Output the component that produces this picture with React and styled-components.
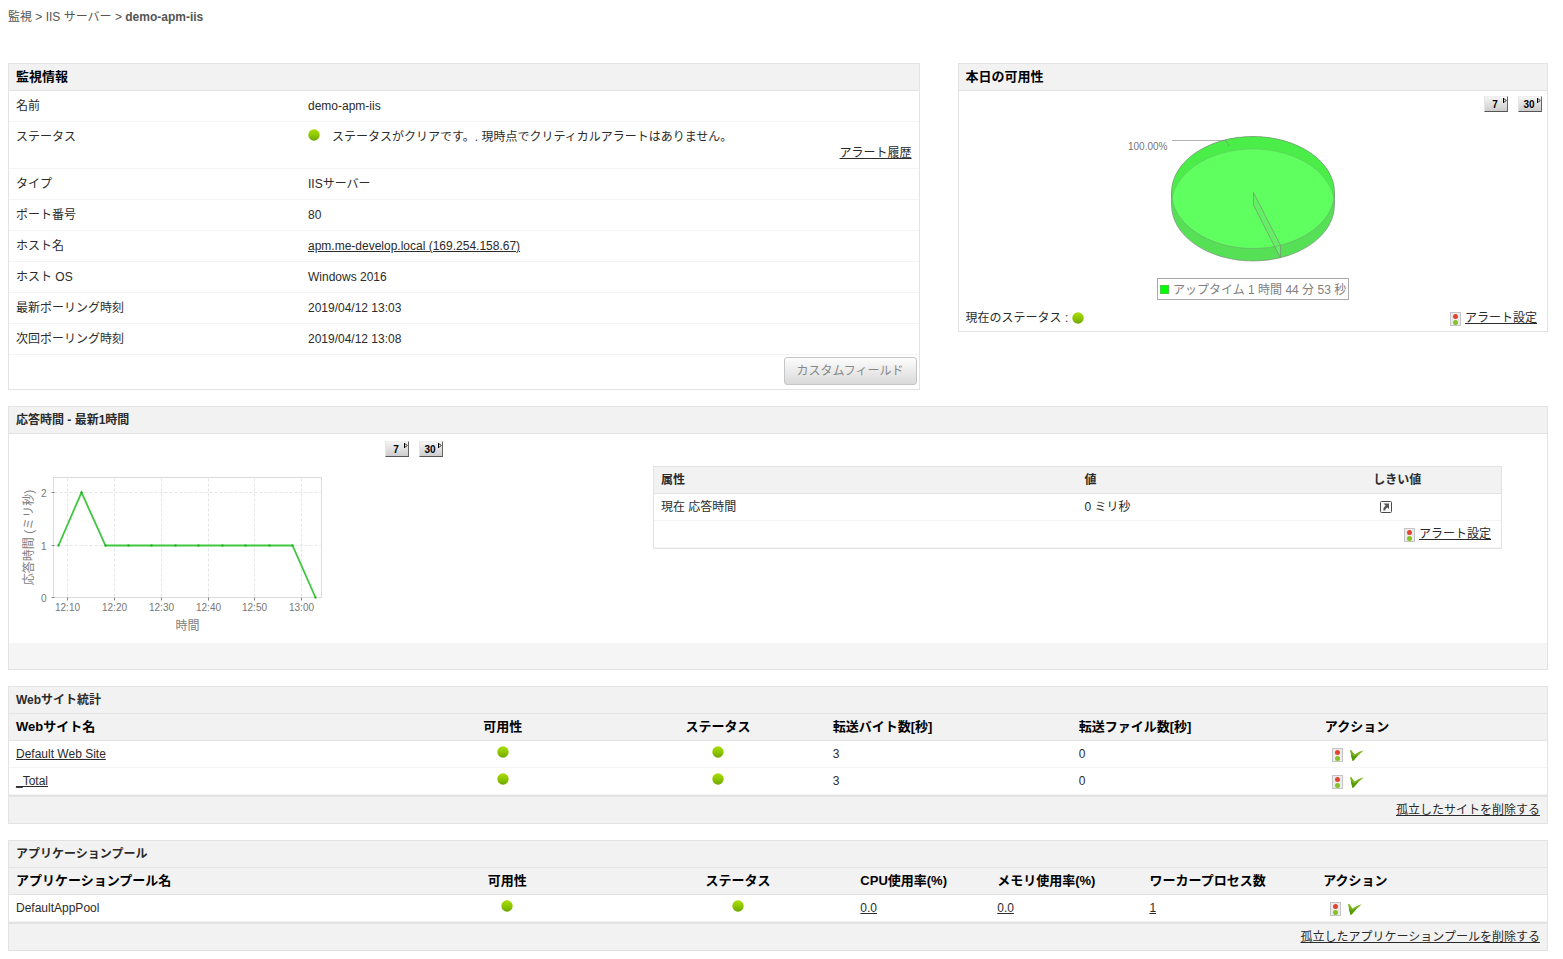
import React from 'react'
import styled, { createGlobalStyle } from 'styled-components'

const GlobalStyle = createGlobalStyle`
    body {
        margin: 0;
        background: #fff;
        color: #2b2b2b;
        font-family: "Liberation Sans", "Noto Sans CJK JP", sans-serif;
        font-size: 12px;
        line-height: 16px;
    }
    *, *::before, *::after {
        box-sizing: border-box;
    }
`

const line = '#e3e3e3'
const softLine = '#f4f4f4'
const headBg = '#f2f2f2'

const Page = styled.main`
    display: flex;
    flex-direction: column;
    gap: 16px;
    padding: 9px 15px 8px 8px;
`
const Breadcrumb = styled.nav`
    margin-bottom: 22px;
    color: #555;
`
const Crumb = styled.a`
    color: #555;
    text-decoration: none;
`
const TopRow = styled.div`
    display: flex;
    align-items: flex-start;
    gap: 38px;
`
const Panel = styled.section`
    min-width: 0;
    flex: ${(props) => props.$grow || 'none'};
    border: 1px solid ${line};
`
const PanelTitle = styled.h2`
    margin: 0;
    padding: 5px 7px;
    background: ${headBg};
    border-bottom: 1px solid ${line};
    color: ${(props) => (props.$large ? '#000' : '#2b2b2b')};
    font-size: ${(props) => (props.$large ? '13px' : '12px')};
    line-height: 16px;
`
const Table = styled.table`
    width: 100%;
    table-layout: fixed;
    border-collapse: separate;
    border-spacing: 0;
`
const InfoLabel = styled.th`
    width: 32.1%;
    padding: 7px;
    border-bottom: 1px solid ${softLine};
    font-weight: normal;
    text-align: left;
    vertical-align: top;
`
const InfoValue = styled.td`
    padding: 7px;
    border-bottom: 1px solid ${softLine};
`
const Th = styled.th`
    padding: 5px 7px;
    background: ${headBg};
    border-bottom: 1px solid ${line};
    color: ${(props) => (props.$small ? '#2b2b2b' : '#000')};
    font-size: ${(props) => (props.$small ? '12px' : '13px')};
    text-align: ${(props) => props.$align || 'left'};
    white-space: nowrap;
`
const Td = styled.td`
    height: 27px;
    padding: 5px 7px 5px ${(props) => (props.$indent ? '14px' : '7px')};
    border-bottom: 1px solid ${softLine};
    text-align: ${(props) => props.$align || 'left'};
`
const FootTd = styled.td`
    padding: 5px 7px;
    background: ${headBg};
    border-top: 2px solid ${line};
    text-align: right;
`
const Link = styled.a`
    color: #2b2b2b;
    text-decoration: underline;
`
const StatusText = styled.span`
    margin-left: 12px;
`
const RightLine = styled.div`
    text-align: right;
`
const ButtonRow = styled.div`
    display: flex;
    justify-content: flex-end;
    padding: 2px 2px 4px;
`
const CustomButton = styled.button`
    height: 28px;
    padding: 0 12px;
    border: 1px solid #c6c6c6;
    border-radius: 3px;
    background: linear-gradient(#fdfdfd, #d9d9d9);
    color: #888;
    font: inherit;
`
const RangeRow = styled.div`
    display: flex;
    justify-content: flex-end;
    gap: 10px;
`
const RangeButton = styled.button`
    position: relative;
    width: 24px;
    height: 16px;
    padding: 0 2px 0 0;
    border: 1px solid;
    border-color: #efefef #666 #555 #e6e6e6;
    background: linear-gradient(#f4f4f4, #cdcdcd);
    color: #000;
    font: bold 10px/16px "Liberation Sans", sans-serif;
`
const RangeArrow = styled.svg`
    position: absolute;
    top: 1px;
    right: 0;
`
const Icon = styled.svg`
    vertical-align: ${(props) => props.$drop || '0'};
`
const PieBody = styled.div`
    padding: 5px;
`
const Pie = styled.svg`
    display: block;
    margin: 0 auto;
`
const PieFoot = styled.div`
    display: flex;
    justify-content: space-between;
    padding: 6px 5px 0 2px;
`
const AlertWrap = styled.span`
    display: inline-flex;
    align-items: flex-end;
    gap: 4px;
    vertical-align: top;
`
const ResponseBody = styled.div`
    display: flex;
    align-items: flex-start;
    gap: 210px;
    padding: 7px 45px 0 0;
`
const ChartColumn = styled.div`
    flex: 0 0 434px;
`
const Chart = styled.svg`
    display: block;
    margin-top: 9px;
`
const AttrBox = styled.div`
    flex: 1;
    min-width: 0;
    margin-top: 25px;
    border: 1px solid ${line};
`
const Band = styled.div`
    height: 26px;
    background: #f5f5f5;
`
const AlertTd = styled(Td)`
    padding-right: 10px;
    text-align: right;
`
const Tick = styled(Icon)`
    margin-left: 7px;
`

const Dot = ({ drop }) => (
  <Icon $drop={drop} width="12" height="12" role="img" aria-label="クリア">
    <defs>
      <linearGradient id="dotFill" x1="0" y1="0" x2="0" y2="1">
        <stop offset="0" stopColor="#a8dc00" />
        <stop offset="0.5" stopColor="#8fc800" />
        <stop offset="1" stopColor="#6fa500" />
      </linearGradient>
    </defs>
    <circle cx="6" cy="6" r="5.7" fill="url(#dotFill)" />
  </Icon>
)

const TrafficLight = () => (
  <Icon $drop="-4px" width="11" height="14" aria-hidden="true">
    <rect x="0.5" y="0.5" width="10" height="13" fill="#ececec" stroke="#c4c4c4" />
    <circle cx="5.5" cy="4.5" r="2.5" fill="#e2452f" />
    <circle cx="5.5" cy="10.5" r="2.5" fill="#86c224" />
  </Icon>
)

const TickMark = () => (
  <Tick $drop="-3px" width="14" height="11" aria-hidden="true">
    <path d="M0 0.2 L1.2 0 L4.6 4.4 Q8.5 1.6 13.8 0.3 Q9 4.2 3.6 10.6 L2.4 10.8 Z" fill="#78b51a" />
    <path d="M0.8 4 L3.8 6.6 L8.5 4.2 Q6 7.4 3.6 10.6 L2.4 10.8 Z" fill="#549a08" />
  </Tick>
)

const Shortcut = () => (
  <Icon $drop="-2px" width="12" height="12" role="img" aria-label="しきい値を表示">
    <rect x="0.5" y="0.5" width="11" height="11" rx="1" fill="#f8f8f8" stroke="#4a4a4a" />
    <path d="M3.5 2.5 H9 V8 L7.4 6.4 Q5.4 7.2 5.2 9.5 H3.4 Q3.2 6.6 5.6 4.6 Z" fill="#555" />
  </Icon>
)

const Ranges = () => (
  <RangeRow>
    {[7, 30].map((days) => (
      <RangeButton key={days} type="button">
        {days}
        <RangeArrow width="4" height="5" aria-hidden="true">
          <path d="M0.5 0 V5 M1 0.5 L3 2.5 L1 4.5" fill="none" stroke="#000" />
        </RangeArrow>
      </RangeButton>
    ))}
  </RangeRow>
)

const AlertSetting = () => (
  <AlertWrap>
    <TrafficLight />
    <Link href="#alert">アラート設定</Link>
  </AlertWrap>
)

const UptimePie = () => (
  <Pie width="300" height="192" viewBox="0 0 300 192">
    <defs>
      <clipPath id="topFace">
        <ellipse cx="150" cy="80.5" rx="81.5" ry="56" />
      </clipPath>
    </defs>
    <path d="M68.5 80.5 A81.5 56 0 0 1 231.5 80.5 V93 A81.5 56 0 0 1 68.5 93 Z" fill="#55e055" />
    <ellipse cx="150" cy="80.5" rx="81.5" ry="56" fill="#4bee49" />
    <ellipse cx="150" cy="93" rx="81.5" ry="56" fill="#5eff5e" clipPath="url(#topFace)" />
    <path d="M150.5 80.5 L177.5 133.5 V146 L150.5 93 Z" fill="#64f064" />
    <g fill="none" stroke="#808080" strokeOpacity="0.6">
      <path d="M68.5 80.5 A81.5 56 0 0 1 231.5 80.5 V93 A81.5 56 0 0 1 68.5 93 Z" />
      <path d="M68.5 80.5 A81.5 56 0 0 0 231.5 80.5" strokeOpacity="0.4" />
      <path d="M68.5 93 A81.5 56 0 0 1 231.5 93" strokeOpacity="0.25" />
      <path d="M150.5 80.5 L177.5 133.5 V146 L150.5 93 Z" />
      <path d="M69 28.5 H123 L126 34" />
    </g>
    <text x="25" y="38" fontSize="10" fill="#777">100.00%</text>
    <rect x="54.5" y="166.5" width="191" height="21" fill="#fff" stroke="#aaa" />
    <rect x="57.5" y="173.5" width="8" height="8" fill="#0f0" stroke="#4c4" />
    <text x="70" y="182" fontSize="12" fill="#808080">アップタイム 1 時間 44 分 53 秒</text>
  </Pie>
)

const xTicks = [
  [58, '12:10'],
  [105, '12:20'],
  [152, '12:30'],
  [199, '12:40'],
  [245, '12:50'],
  [292, '13:00'],
]
const yTicks = [[26, 2], [79, 1], [131, 0]]
const samples = [[49, 79], [72, 26], [96, 79], [119, 79], [142, 79], [166, 79], [189, 79], [213, 79], [236, 79], [260, 79], [283, 79], [306, 131]]

const ResponseChart = () => (
  <Chart width="330" height="177" viewBox="-0.5 -0.5 330 177">
    <rect x="44" y="11" width="268" height="120" fill="#fff" stroke="#dcdcdc" />
    {xTicks.map(([x, label]) => (
      <g key={label}>
        <path d={`M${x} 12 V130`} stroke="#e4e4e4" strokeDasharray="3 2" />
        <path d={`M${x} 131 V134`} stroke="#888" />
        <text x={x} y="144" fontSize="10" fill="#777" textAnchor="middle">{label}</text>
      </g>
    ))}
    {yTicks.map(([y, label]) => (
      <g key={label}>
        {label > 0 && <path d={`M45 ${y} H311`} stroke="#e4e4e4" strokeDasharray="3 2" />}
        <path d={`M42 ${y} H45`} stroke="#888" />
        <text x="37" y={y + 4} fontSize="10" fill="#777" textAnchor="end">{label}</text>
      </g>
    ))}
    <polyline points={samples.join(' ')} fill="none" stroke="#3fc83f" strokeWidth="1.8" />
    {samples.map(([x, y]) => (
      <rect key={x} x={x - 1} y={y - 1} width="2" height="2" fill="#1fae1f" />
    ))}
    <text x="178" y="163" fontSize="12" fill="#808080" textAnchor="middle">時間</text>
    <text transform="translate(23 71) rotate(-90)" fontSize="12" fill="#808080" textAnchor="middle">応答時間 (ミリ秒)</text>
  </Chart>
)

const info = [
  ['タイプ', 'IISサーバー'],
  ['ポート番号', '80'],
  ['ホスト名', <Link href="#host">apm.me-develop.local (169.254.158.67)</Link>],
  ['ホスト OS', 'Windows 2016'],
  ['最新ポーリング時刻', '2019/04/12 13:03'],
  ['次回ポーリング時刻', '2019/04/12 13:08'],
]

const siteColumns = [
  ['Webサイト名', '25.1%'],
  ['可用性', '14%', 'center'],
  ['ステータス', '14%', 'center'],
  ['転送バイト数[秒]', '16%'],
  ['転送ファイル数[秒]', '16%'],
  ['アクション', '14.9%'],
]
const sites = ['Default Web Site', '_Total']

const poolColumns = [
  ['アプリケーションプール名', '24.9%'],
  ['可用性', '15%', 'center'],
  ['ステータス', '15%', 'center'],
  ['CPU使用率(%)', '8.9%'],
  ['メモリ使用率(%)', '9.9%'],
  ['ワーカープロセス数', '11.3%'],
  ['アクション', '15%'],
]

const Columns = ({ columns }) => (
  <>
    <colgroup>
      {columns.map(([label, width]) => (
        <col key={label} width={width} />
      ))}
    </colgroup>
    <thead>
      <tr>
        {columns.map(([label, , align]) => (
          <Th key={label} scope="col" $align={align}>{label}</Th>
        ))}
      </tr>
    </thead>
  </>
)

const App = () => {
  return (
    <Page>
      <GlobalStyle />
      <Breadcrumb>
        <Crumb href="#monitors">監視</Crumb> &gt; <Crumb href="#iis">IIS サーバー</Crumb> &gt; <b>demo-apm-iis</b>
      </Breadcrumb>

      <TopRow>
        <Panel $grow="912 1 0">
          <PanelTitle $large>監視情報</PanelTitle>
          <Table>
            <tbody>
              <tr>
                <InfoLabel scope="row">名前</InfoLabel>
                <InfoValue>demo-apm-iis</InfoValue>
              </tr>
              <tr>
                <InfoLabel scope="row">ステータス</InfoLabel>
                <InfoValue>
                  <Dot />
                  <StatusText>ステータスがクリアです。. 現時点でクリティカルアラートはありません。</StatusText>
                  <RightLine><Link href="#history">アラート履歴</Link></RightLine>
                </InfoValue>
              </tr>
              {info.map(([label, value]) => (
                <tr key={label}>
                  <InfoLabel scope="row">{label}</InfoLabel>
                  <InfoValue>{value}</InfoValue>
                </tr>
              ))}
            </tbody>
          </Table>
          <ButtonRow>
            <CustomButton type="button">カスタムフィールド</CustomButton>
          </ButtonRow>
        </Panel>

        <Panel $grow="590 1 0">
          <PanelTitle $large>本日の可用性</PanelTitle>
          <PieBody>
            <Ranges />
            <UptimePie />
            <PieFoot>
              <span>現在のステータス : <Dot drop="-2px" /></span>
              <AlertSetting />
            </PieFoot>
          </PieBody>
        </Panel>
      </TopRow>

      <Panel>
        <PanelTitle>応答時間 - 最新1時間</PanelTitle>
        <ResponseBody>
          <ChartColumn>
            <Ranges />
            <ResponseChart />
          </ChartColumn>
          <AttrBox>
            <Table>
              <colgroup>
                <col width="50%" />
                <col width="34.1%" />
                <col width="15.9%" />
              </colgroup>
              <thead>
                <tr>
                  <Th $small scope="col">属性</Th>
                  <Th $small scope="col">値</Th>
                  <Th $small scope="col">しきい値</Th>
                </tr>
              </thead>
              <tbody>
                <tr>
                  <Td>現在 応答時間</Td>
                  <Td>0 ミリ秒</Td>
                  <Td $indent><Shortcut /></Td>
                </tr>
                <tr>
                  <AlertTd colSpan={3}><AlertSetting /></AlertTd>
                </tr>
              </tbody>
            </Table>
          </AttrBox>
        </ResponseBody>
        <Band />
      </Panel>

      <Panel>
        <PanelTitle>Webサイト統計</PanelTitle>
        <Table>
          <Columns columns={siteColumns} />
          <tbody>
            {sites.map((name) => (
              <tr key={name}>
                <Td><Link href="#site">{name}</Link></Td>
                <Td $align="center"><Dot /></Td>
                <Td $align="center"><Dot /></Td>
                <Td>3</Td>
                <Td>0</Td>
                <Td $indent><TrafficLight /><TickMark /></Td>
              </tr>
            ))}
          </tbody>
          <tfoot>
            <tr>
              <FootTd colSpan={6}><Link href="#delete-sites">孤立したサイトを削除する</Link></FootTd>
            </tr>
          </tfoot>
        </Table>
      </Panel>

      <Panel>
        <PanelTitle>アプリケーションプール</PanelTitle>
        <Table>
          <Columns columns={poolColumns} />
          <tbody>
            <tr>
              <Td>DefaultAppPool</Td>
              <Td $align="center"><Dot /></Td>
              <Td $align="center"><Dot /></Td>
              <Td><Link href="#cpu">0.0</Link></Td>
              <Td><Link href="#memory">0.0</Link></Td>
              <Td><Link href="#workers">1</Link></Td>
              <Td $indent><TrafficLight /><TickMark /></Td>
            </tr>
          </tbody>
          <tfoot>
            <tr>
              <FootTd colSpan={7}><Link href="#delete-pools">孤立したアプリケーションプールを削除する</Link></FootTd>
            </tr>
          </tfoot>
        </Table>
      </Panel>
    </Page>
  )
}

export default App
